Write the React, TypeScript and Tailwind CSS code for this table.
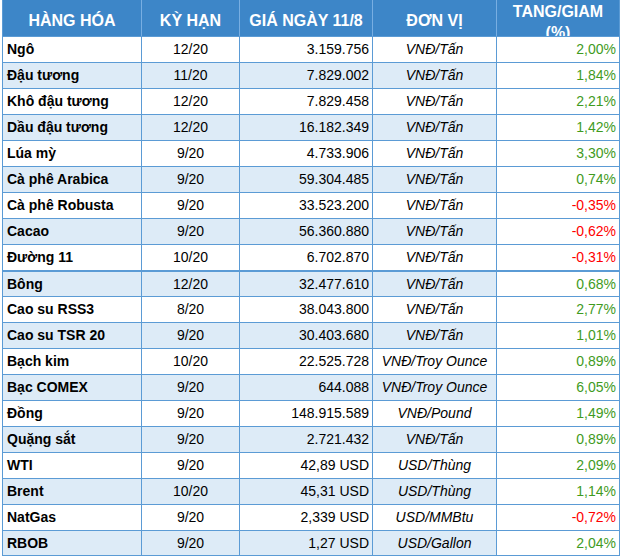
const rows: [string, string, string, string, string][] = [
  ["Ngô", "12/20", "3.159.756", "VNĐ/Tấn", "2,00%"],
  ["Đậu tương", "11/20", "7.829.002", "VNĐ/Tấn", "1,84%"],
  ["Khô đậu tương", "12/20", "7.829.458", "VNĐ/Tấn", "2,21%"],
  ["Dầu đậu tương", "12/20", "16.182.349", "VNĐ/Tấn", "1,42%"],
  ["Lúa mỳ", "9/20", "4.733.906", "VNĐ/Tấn", "3,30%"],
  ["Cà phê Arabica", "9/20", "59.304.485", "VNĐ/Tấn", "0,74%"],
  ["Cà phê Robusta", "9/20", "33.523.200", "VNĐ/Tấn", "-0,35%"],
  ["Cacao", "9/20", "56.360.880", "VNĐ/Tấn", "-0,62%"],
  ["Đường 11", "10/20", "6.702.870", "VNĐ/Tấn", "-0,31%"],
  ["Bông", "12/20", "32.477.610", "VNĐ/Tấn", "0,68%"],
  ["Cao su RSS3", "8/20", "38.043.800", "VNĐ/Tấn", "2,77%"],
  ["Cao su TSR 20", "9/20", "30.403.680", "VNĐ/Tấn", "1,01%"],
  ["Bạch kim", "10/20", "22.525.728", "VNĐ/Troy Ounce", "0,89%"],
  ["Bạc COMEX", "9/20", "644.088", "VNĐ/Troy Ounce", "6,05%"],
  ["Đồng", "9/20", "148.915.589", "VNĐ/Pound", "1,49%"],
  ["Quặng sắt", "9/20", "2.721.432", "VNĐ/Tấn", "0,89%"],
  ["WTI", "9/20", "42,89 USD", "USD/Thùng", "2,09%"],
  ["Brent", "10/20", "45,31 USD", "USD/Thùng", "1,14%"],
  ["NatGas", "9/20", "2,339 USD", "USD/MMBtu", "-0,72%"],
  ["RBOB", "9/20", "1,27 USD", "USD/Gallon", "2,04%"],
]

export default function App() {
  return (
    <div className="w-[625px] h-[559px] bg-white font-['Liberation_Sans',Arial,sans-serif] text-black overflow-hidden">
      <div className="ml-[2px] w-[618px] border-r border-[#5b9bd5]">
        {/* Header */}
        <div className="flex h-[36px] bg-[#3d86c8] text-white font-bold text-[16px] leading-[18px]">
          <div className="w-[139px] border-l border-[#5b9bd5] pt-[12px] text-center">HÀNG HÓA</div>
          <div className="w-[98px] border-l border-[#78aee2] pt-[12px] text-center">KỲ HẠN</div>
          <div className="w-[133px] border-l border-[#78aee2] pt-[12px] text-center">GIÁ NGÀY 11/8</div>
          <div className="w-[124px] border-l border-[#78aee2] pt-[12px] text-center">ĐƠN VỊ</div>
          <div className="w-[123px] border-l border-[#78aee2] pt-[1px] leading-[21px] text-center overflow-hidden">
            TANG/GIAM
            <br />
            (%)
          </div>
        </div>

        {/* Body */}
        {rows.map(([name, term, price, unit, change], i) => {
          const shaded = i % 2 === 1
          const bg = shaded ? "bg-[#ddebf7]" : "bg-white"
          const negative = change.startsWith("-")
          return (
            <div
              key={name}
              className={`flex h-[26px] text-[14px] ${i === 9 ? "border-t-2" : "border-t"} border-[#5b9bd5] ${i === 19 ? "border-b" : ""}`}
            >
              <div className={`w-[139px] border-l border-[#5b9bd5] ${bg} pl-[4px] flex items-center font-bold`}>{name}</div>
              <div className={`w-[98px] border-l border-[#5b9bd5] ${bg} flex items-center justify-center`}>{term}</div>
              <div className={`w-[133px] border-l border-[#5b9bd5] ${bg} pr-[3px] flex items-center justify-end`}>{price}</div>
              <div className={`w-[124px] border-l border-[#5b9bd5] ${bg} flex items-center justify-center italic whitespace-nowrap`}>{unit}</div>
              <div
                className={`w-[123px] border-l border-[#5b9bd5] bg-white pr-[3px] flex items-center justify-end ${negative ? "text-[#ff0000]" : "text-[#3f9b1e]"}`}
              >
                {change}
              </div>
            </div>
          )
        })}
      </div>
    </div>
  )
}
